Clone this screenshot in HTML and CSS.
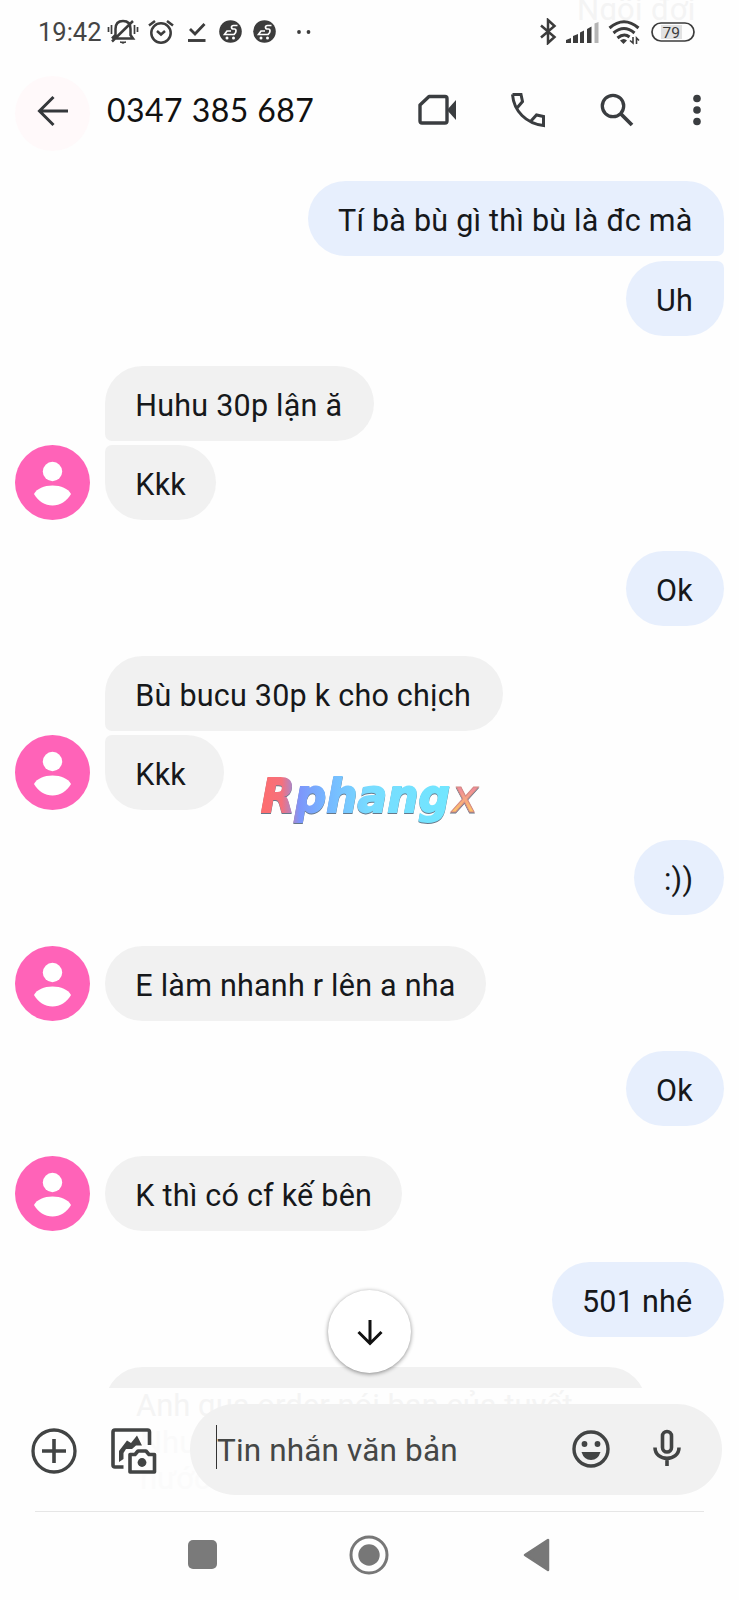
FILE: index.html
```html
<!DOCTYPE html>
<html lang="vi">
<head>
<meta charset="utf-8">
<title>0347 385 687</title>
<link rel="stylesheet" href="styles.css">
</head>
<body>
<svg class="defs" width="0" height="0">
  <defs>
    <symbol id="person" viewBox="0 0 75 75"><circle cx="37.500" cy="37.500" r="37.500" fill="#ff63b8"/><circle cx="37.500" cy="26.500" r="9.700" fill="#fff"/><path d="M19 49C22 43.500 29 40.500 37.500 40.500S53 43.500 56 49C52 56 45 60.500 37.500 60.500S23 56 19 49Z" fill="#fff"/></symbol>
    <symbol id="cart" viewBox="0 0 23 23"><circle cx="11.500" cy="11.500" r="11.300" fill="#3c3c3c"/><path d="M18.500 5.500H14.500Q12.500 5.500 12.500 7.200T14.500 9H15.500Q17 9 17 11T15 14.500H5.500L8 11H12" fill="none" stroke="#fff" stroke-width="1.700"/><circle cx="8" cy="18" r="1.500" fill="#fff"/><circle cx="14.500" cy="18" r="1.500" fill="#fff"/></symbol>
  </defs>
</svg>
<div class="phone">
  <div class="status">
    <span class="clock">19:42</span>
    <svg class="i-bell" width="32" height="28" viewBox="0 0 32 28" fill="none" stroke="#3c3c3c" stroke-width="2"><path d="M8 20.500H26L23.500 17V11Q23.500 3 16 3T8.500 11V17L5 20.500M26 3L5 23.500" stroke-width="2.500"/><path d="M4.500 7V16M1.500 9V14M27.500 7V16M30.500 9V14" stroke-width="1.700"/><path d="M13 24Q16 26.500 19 24Z" fill="#3c3c3c" stroke-width="1"/></svg>
    <svg class="i-alarm" width="28" height="26" viewBox="0 0 28 26" fill="none" stroke="#3c3c3c" stroke-width="2.500"><circle cx="14" cy="14" r="9.700"/><path d="M10 12L14 15.500L18 12M2 6.500L8 2M26 6.500L20 2"/></svg>
    <svg class="i-check" width="18" height="20" viewBox="0 0 18 20" fill="none" stroke="#3c3c3c"><path d="M2 7L7 12L16.500 2" stroke-width="2.800"/><path d="M0 18.500H17.500" stroke-width="2.900"/></svg>
    <svg class="i-cart" width="23" height="23"><use href="#cart"/></svg>
    <svg class="i-cart2" width="23" height="23"><use href="#cart"/></svg>
    <svg class="i-dots" width="16" height="6" viewBox="0 0 16 6" fill="#3c3c3c"><circle cx="3" cy="3" r="1.900"/><circle cx="12.500" cy="3" r="1.900"/></svg>
    <div class="status-right">
      <svg width="17" height="27" viewBox="0 0 17 27" fill="none" stroke="#3c3c3c" stroke-width="2.500"><path d="M1 7.500L14.500 19L8 25V2L14.500 8L1 19.500"/></svg>
      <svg class="i-signal" width="33" height="21" viewBox="0 0 33 21" fill="#3c3c3c"><path d="M0 21V18L5 16V21ZM7 21V14L12 12V21ZM14 21V10.500L18 8.500V21ZM21 21V7L25.500 4.500V21Z"/><path d="M28.500 21V1.500L32.500 0V21Z" fill="#b5b5b5"/></svg>
      <svg class="i-wifi" width="32" height="25" viewBox="0 0 32 25" fill="none" stroke="#3c3c3c" stroke-width="3"><path d="M1.500 8Q16-4.500 30.500 8M5.500 13Q16 4 26.500 13M9.500 18Q16 12.500 21.500 17"/><path d="M12 20.500Q16 17.500 19 20.500L15.500 24Z" fill="#3c3c3c" stroke="none"/><path d="M25 17V23L22 20.500M28.500 24V18L31 20.500" stroke-width="1.600"/></svg>
      <svg class="i-batt" width="44" height="20" viewBox="0 0 44 20"><rect x="10" y="3" width="21" height="14" fill="#e2e2e2"/><rect x="1" y="1" width="42" height="18" rx="9" fill="none" stroke="#3c3c3c" stroke-width="1.700"/><text x="11.500" y="15.500" class="batt-text">79</text></svg>
    </div>
    <span class="ghost ghost-top">Ngồi đợi</span>
  </div>

  <header class="topbar">
    <div class="back"><svg width="32" height="32" viewBox="0 0 32 32" fill="none" stroke="#35383b" stroke-width="3"><path d="M31 16H3M16.500 2L2.500 16L16.500 30"/></svg></div>
    <h1>0347 385 687</h1>
    <div class="actions">
      <svg width="38" height="32" viewBox="0 0 38 32"><path d="M11 2.500H27Q29 2.500 29 4.500V27Q29 29 27 29H4Q2 29 2 27V11Z" fill="none" stroke="#3a3d40" stroke-width="3.400" stroke-linejoin="round"/><path d="M29 16L38 6V26Z" fill="#3a3d40"/></svg>
      <svg class="a-phone" width="36" height="36" viewBox="0 0 36 36" fill="none" stroke="#3a3d40" stroke-width="3"><path d="M2.500 2.500H11L12.500 9.500L7 16M2.500 2.500Q3.500 15 12 23.500T33.500 33.500V24.500L26.500 23L20.500 29.500"/></svg>
      <svg class="a-search" width="34" height="34" viewBox="0 0 34 34" fill="none" stroke="#3a3d40" stroke-width="3.300"><circle cx="13" cy="13" r="10.700"/><path d="M20.500 20.500L32 32" stroke-width="3.800"/></svg>
      <svg class="a-more" width="8" height="32" viewBox="0 0 8 32" fill="#3a3d40"><circle cx="4" cy="4.500" r="3.800"/><circle cx="4" cy="16" r="3.800"/><circle cx="4" cy="27.500" r="3.800"/></svg>
    </div>
  </header>

  <main class="chat">
    <div class="group out">
      <p class="bubble first w416">Tí bà bù gì thì bù là đc mà</p>
      <p class="bubble last w98">Uh</p>
    </div>
    <div class="group in">
      <svg class="avatar"><use href="#person"/></svg>
      <div class="stack"><p class="bubble first w269">Huhu 30p lận ă</p><p class="bubble last w111">Kkk</p></div>
    </div>
    <div class="group out"><p class="bubble w98">Ok</p></div>
    <div class="group in">
      <svg class="avatar"><use href="#person"/></svg>
      <div class="stack"><p class="bubble first w398">Bù bucu 30p k cho chịch</p><p class="bubble last w119">Kkk</p></div>
    </div>
    <div class="group out"><p class="bubble w90">:))</p></div>
    <div class="group in">
      <svg class="avatar"><use href="#person"/></svg>
      <div class="stack"><p class="bubble w381">E làm nhanh r lên a nha</p></div>
    </div>
    <div class="group out"><p class="bubble w98">Ok</p></div>
    <div class="group in">
      <svg class="avatar"><use href="#person"/></svg>
      <div class="stack"><p class="bubble w297">K thì có cf kế bên</p></div>
    </div>
    <div class="group out"><p class="bubble w172">501 nhé</p></div>
    <div class="group in"><div class="stack"><p class="bubble w541"></p></div></div>
  </main>

  <svg class="mark" width="230" height="60" viewBox="0 0 230 60">
    <defs><linearGradient id="mk" gradientUnits="userSpaceOnUse" x1="4" y1="0" x2="222" y2="0"><stop offset="0" stop-color="#ff6d6d"/><stop offset=".1" stop-color="#f5707c"/><stop offset=".18" stop-color="#7d95fa"/><stop offset=".3" stop-color="#76b6ff"/><stop offset=".5" stop-color="#78dcff"/><stop offset="1" stop-color="#6feaff"/></linearGradient>
    <linearGradient id="mx" x1="0" y1="0" x2="0" y2="1"><stop offset=".35" stop-color="#f08a9b"/><stop offset=".8" stop-color="#ffc765"/></linearGradient></defs>
    <text class="mark-text" x="5" y="44" textLength="189" lengthAdjust="spacingAndGlyphs" fill="url(#mk)" stroke="url(#mk)">Rphang</text>
    <text class="mark-text mark-x" x="196" y="44" textLength="26" lengthAdjust="spacingAndGlyphs" fill="url(#mx)">x</text>
  </svg>

  <div class="jump"><svg width="28" height="28" viewBox="0 0 28 28" fill="none" stroke="#111" stroke-width="3"><path d="M14 2V25M2.500 14L14 25.500L25.500 14"/></svg></div>

  <footer class="composer">
    <span class="ghost g1">Anh qua order nói bạn của tuyết</span>
    <span class="ghost g2">Nhu</span>
    <span class="ghost g3">nước</span>
    <svg class="c-plus" width="46" height="46" viewBox="0 0 46 46" fill="none" stroke="#424444" stroke-width="3.300"><circle cx="23" cy="23" r="21"/><path d="M23 11V35M11 23H35" stroke-width="3.600"/></svg>
    <svg class="c-gallery" width="46" height="46" viewBox="0 0 46 46" fill="none" stroke="#424444" stroke-width="3.600"><path d="M38.500 17V4Q38.500 2 36.500 2H4Q2 2 2 4V37Q2 39 4 39H12.500"/><path d="M8 34V23L16 12.500L20 15L26 7.500L31 17.500H25L21 21H15L12.500 25V31Z" fill="#424444" stroke="none"/><path d="M19 26.500H24L27 23H35L38 26.500H43.500V44H19Z" stroke-linejoin="round"/><circle cx="31" cy="34.500" r="4.400" fill="#424444" stroke="none"/></svg>
    <div class="field">
      <span class="caret"></span><span class="hint">Tin nhắn văn bản</span>
      <svg class="f-emoji" width="38" height="38" viewBox="0 0 38 38" fill="#424444"><circle cx="19" cy="19" r="17" fill="none" stroke="#424444" stroke-width="3.400"/><circle cx="12.500" cy="14" r="2.900"/><circle cx="25.500" cy="14" r="2.900"/><path d="M9.500 22H28.500Q26 30 19 30T9.500 22Z"/></svg>
      <svg class="f-mic" width="28" height="38" viewBox="0 0 28 38" fill="none" stroke="#424444" stroke-width="3.600"><rect x="9.500" y="2.500" width="9" height="20.500" rx="4.500"/><path d="M2 18.500C2 33 26 33 26 18.500M14 29V37"/></svg>
    </div>
  </footer>
  <nav class="navbar">
    <span class="recent"></span>
    <svg width="40" height="40" viewBox="0 0 40 40"><circle cx="20" cy="20" r="18" fill="none" stroke="#777" stroke-width="3"/><circle cx="20" cy="20" r="10.700" fill="#777"/></svg>
    <svg class="n-back" width="27" height="34" viewBox="0 0 27 34"><path d="M2 17L25 2V32Z" fill="#777" stroke="#777" stroke-width="2.500" stroke-linejoin="round"/></svg>
  </nav>
</div>
</body>
</html>
```
FILE: styles.css
```css
* { box-sizing: border-box; margin: 0; padding: 0; }
body { background: #fefefe; font-family: Roboto, "Noto Sans", sans-serif; color: #16181b; }
svg { display: block; flex: none; }
.defs { position: absolute; }
.phone { position: relative; width: 739px; height: 1600px; overflow: hidden; display: flex; flex-direction: column; }

.status { position: relative; height: 63px; display: flex; align-items: center; padding: 0 44px 0 38px; flex: none; }
.clock { width: 64px; font-size: 25.5px; letter-spacing: 0; color: #444; white-space: nowrap; padding-top: 1px; }
.i-bell { margin-left: 5px; }
.i-alarm { margin-left: 8px; }
.i-check { margin-left: 13px; margin-top: 1px; }
.i-cart { margin-left: 13px; }
.i-cart2 { margin-left: 11px; }
.i-dots { margin-left: 20px; }
.status-right { display: flex; align-items: center; margin-left: auto; }
.i-signal { margin-left: 9px; margin-top: 2px; }
.i-wifi { margin-left: 9px; margin-top: 1px; }
.i-batt { margin-left: 11px; }
.batt-text { font: 400 15.5px Roboto, sans-serif; fill: #3c3c3c; }
.ghost { color: #f4f4f4; font-size: 31px; line-height: 36px; white-space: nowrap; position: absolute; }
.ghost-top { left: 577px; top: -8px; letter-spacing: .3px; height: 28px; overflow: hidden; }

.topbar { height: 118.4px; flex: none; display: flex; align-items: flex-start; padding: 10px 38px 0 15px; }
.back { width: 75px; height: 75px; border-radius: 50%; background: #fff9fa; display: grid; place-items: center; margin-top: 3px; padding-bottom: 6px; }
h1 { margin-left: 17px; font: 400 32px/74px Lato, sans-serif; letter-spacing: .45px; color: #111; white-space: nowrap; }
.actions { display: flex; align-items: center; height: 74px; margin-left: auto; }
.a-phone { margin-left: 54px; }
.a-search { margin-left: 54px; }
.a-more { margin-left: 59px; }

.chat { height: 1206.6px; flex: none; overflow: hidden; padding: 0 15px; display: flex; flex-direction: column; gap: 30.3px; }
.group { display: flex; flex: none; }
.out { flex-direction: column; align-items: flex-end; gap: 4.3px; }
.in { align-items: flex-end; }
.avatar { width: 75px; height: 75px; }
.stack { display: flex; flex-direction: column; gap: 4.3px; margin-left: auto; width: 618.7px; }
.bubble { height: 75px; border-radius: 38px; padding: 0 0 0 30px; font-size: 30.5px; line-height: 79px; letter-spacing: .23px; white-space: nowrap; background: #f1f1f1; }
.out .bubble { background: #e7effd; }
.out .first { border-bottom-right-radius: 7px; }
.out .last { border-top-right-radius: 7px; }
.in .first { border-bottom-left-radius: 7px; }
.in .last { border-top-left-radius: 7px; }
.w416 { width: 416px; } .w98 { width: 98px; } .w269 { width: 268.5px; } .w111 { width: 111px; }
.w398 { width: 398px; } .w119 { width: 119px; } .w90 { width: 90px; } .w381 { width: 381px; }
.w297 { width: 297px; } .w172 { width: 172px; } .w541 { width: 541px; }

.mark { position: absolute; left: 256px; top: 768px; overflow: visible; filter: drop-shadow(0 1px .5px #66788a); }
.mark-text { font: italic 700 46px "DejaVu Sans", sans-serif; stroke-width: 1.8px; }
.mark-x { font-weight: 400; stroke: #d58b84; stroke-width: 1px; }
.jump { position: absolute; left: 328px; top: 1290px; width: 83px; height: 83px; border-radius: 50%; background: #fff; display: grid; place-items: center; box-shadow: 0 1px 4px rgba(0,0,0,.45); }

.composer { position: relative; height: 123px; flex: none; display: flex; align-items: center; padding: 0 17px 0 31px; }
.g1 { left: 136px; top: 0; letter-spacing: 0; }
.g2 { left: 140px; top: 37px; color: #fafafa; }
.g3 { left: 140px; top: 73px; color: #fbfbfb; }
.c-plus, .c-gallery, .field { position: relative; }
.c-plus { margin-top: 3px; }
.c-gallery { margin-left: 34px; margin-top: 3px; }
.field { width: 532px; height: 91px; margin-left: auto; border-radius: 46px; background: #f1f1f1; display: flex; align-items: center; padding: 0 41px 0 26px; }
.caret { width: 1px; height: 44px; background: #333; margin-top: -4px; }
.hint { font-size: 31.5px; letter-spacing: .15px; color: #454746; padding-top: 3px; }
.f-emoji { margin-left: auto; margin-top: -1px; }
.f-mic { margin-left: 43px; margin-top: -3px; }

.navbar { flex: 1; margin: 0 35px; border-top: 1px solid #e6e6e6; display: flex; align-items: center; padding: 0 118px 2px 153px; }
.recent { width: 29px; height: 29px; border-radius: 5px; background: #7a7a7a; }
.navbar svg { margin-left: 132px; }
.navbar .n-back { margin-left: 134px; }
```
